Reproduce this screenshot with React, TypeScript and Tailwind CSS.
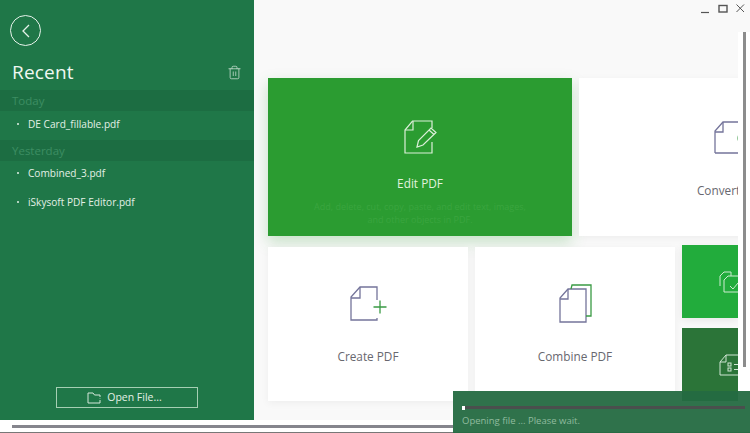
import { Trash2 } from "lucide-react";

const font = { fontFamily: '"Open Sans", "Noto Sans", sans-serif' };

function RecentFile({ name, className }: { name: string; className: string }) {
  return (
    <div className={`flex items-center pl-[17px] text-[10.1px] leading-[16px] text-[#e3f0e6] ${className}`}>
      <span className="mr-[9px] h-[2px] w-[2px] rounded-full bg-[#e3f0e6]" />
      {name}
    </div>
  );
}

function Sidebar() {
  return (
    <aside className="flex w-[254px] shrink-0 flex-col bg-[#1f7748]">
      <div className="ml-[10px] mt-[15px] flex h-[31px] w-[31px] items-center justify-center rounded-full border-[1.5px] border-[#e6f2ea]">
        <svg width="12" height="16" viewBox="0 0 12 16" fill="none" stroke="#e6f2ea" strokeWidth="1.3">
          <path d="M9 2 L3 8 L9 14" />
        </svg>
      </div>
      <div className="mt-[11px] flex h-[30px] items-center justify-between pl-[12px] pr-[12px]">
        <h1 className="text-[19px] leading-[30px] tracking-[0.2px] text-[#f0f7f2]">Recent</h1>
        <Trash2 size={15} strokeWidth={1.2} color="#cfe3d6" />
      </div>
      <div className="mt-[3px] h-[21px] bg-[#1c6d42] pl-[12px] text-[11.5px] leading-[22px] text-[#3c8d62]">Today</div>
      <RecentFile name="DE Card_fillable.pdf" className="mt-[5px]" />
      <div className="mt-[8px] h-[21px] bg-[#1c6d42] pl-[12px] text-[11.5px] leading-[22px] text-[#3c8d62]">Yesterday</div>
      <RecentFile name="Combined_3.pdf" className="mt-[4px]" />
      <RecentFile name="iSkysoft PDF Editor.pdf" className="mt-[13px]" />
      <button className="mx-auto mb-[12px] mt-auto flex h-[21px] w-[142px] items-center justify-center gap-[5px] border border-[#a5cfb3] pr-[5px] text-[10.5px] text-[#e3f0e6]">
        <svg width="15" height="12" viewBox="0 0 15 12" fill="none" stroke="#d5e8da" strokeWidth="1">
          <path d="M1 11 V1 H6 L7.5 3 H13 V5 M13 8 V11 H1" />
          <path d="M13 6.5 V7" />
        </svg>
        Open File...
      </button>
    </aside>
  );
}

function WindowControls() {
  return (
    <div className="flex h-[32px] items-start justify-end gap-[8px] pr-[5px] pt-[3px]">
      <svg width="9" height="10" viewBox="0 0 9 10" className="mt-[1px]" stroke="#555" strokeWidth="1.2">
        <path d="M0 8.5 H8" />
      </svg>
      <svg width="10" height="10" viewBox="0 0 10 10" fill="none" className="mt-[1px]" stroke="#555" strokeWidth="1.4">
        <rect x="1" y="1.5" width="8" height="6.5" />
      </svg>
      <svg width="9" height="10" viewBox="0 0 9 10" className="mt-[1px]" stroke="#555" strokeWidth="1">
        <path d="M0.5 0.5 L8 8 M8 0.5 L0.5 8" />
      </svg>
    </div>
  );
}

function EditIcon() {
  return (
    <svg width="36" height="36" viewBox="0 0 36 36" fill="none" stroke="#dcefd9" strokeWidth="1.2" className="translate-x-[1px]">
      <path d="M29 23 V34 H2 V11 L9.5 2 H29 V9" />
      <path d="M2 11 H10 V2" />
      <path d="M14 28 L15.5 21.5 L28 9 L33 13.5 L20 26 Z" />
      <path d="M26 11 L31 15.5" />
    </svg>
  );
}

function DocIcon({ children }: { children?: React.ReactNode }) {
  return (
    <svg width="44" height="36" viewBox="0 0 44 36" fill="none" stroke="#74749a" strokeWidth="1.3">
      {children}
    </svg>
  );
}

function Card({ title, icon, className = "" }: { title: string; icon: React.ReactNode; className?: string }) {
  return (
    <div className={`flex h-[154px] w-[200px] shrink-0 flex-col items-center bg-white pt-[39px] shadow-[0_2px_8px_rgba(0,0,0,0.05)] ${className}`}>
      <div className="flex h-[36px] items-center justify-center">{icon}</div>
      <div className="mt-[25px] text-[11.8px] leading-[18px] text-[#68686f]">{title}</div>
    </div>
  );
}

function Cards() {
  return (
    <div className="w-[484px] shrink-0 overflow-hidden pl-[14px] pt-[46px]">
      <div className="flex w-[700px] gap-[7px]">
        <div className="flex h-[158px] w-[304px] shrink-0 flex-col items-center bg-[#2b9c31] pt-[41px] shadow-[0_6px_14px_rgba(43,156,49,0.25)]">
          <EditIcon />
          <div className="mt-[19px] text-[11.8px] leading-[18px] text-[#e2f2df]">Edit PDF</div>
          <div className="mt-[8px] w-[230px] text-center text-[9px] leading-[13px] text-[#3aa53f]">
            Add, delete, cut, copy, paste, and edit text, images, and other objects in PDF.
          </div>
        </div>
        <div className="flex h-[158px] w-[304px] shrink-0 flex-col items-center bg-white pt-[42px] shadow-[0_2px_8px_rgba(0,0,0,0.05)]">
          <DocIcon>
            <path d="M6 33 V11 L14 2 H38 V33 H6" />
            <path d="M6 12 H14 V2" />
            <path d="M32 24 A8 8 0 0 1 38 10" stroke="#3a9a44" />
          </DocIcon>
          <div className="mt-[25px] text-[11.8px] leading-[18px] text-[#68686f]">Convert PDF</div>
        </div>
      </div>
      <div className="mt-[11px] flex gap-[7px]">
        <Card
          title="Create PDF"
          icon={
            <DocIcon>
              <path d="M31 14 V1 H14 L5 11 V34 H31 V32" />
              <path d="M5 12 H14 V1" />
              <path d="M34 14.5 V27.5 M27.5 21 H40.5" stroke="#3a9a44" />
            </DocIcon>
          }
        />
        <Card
          title="Combine PDF"
          icon={
            <svg width="34" height="40" viewBox="0 0 34 40" fill="none" stroke="#74749a" strokeWidth="1.3">
              <path d="M2 38 V14 L10 5 H28 V38 Z" />
              <path d="M2 15 H10 V5" />
              <path d="M13 5 L14 1 H33 V32 H28" stroke="#3a9a44" />
            </svg>
          }
        />
        <div className="-mt-[2px] flex flex-col gap-[10px]">
          <div className="flex h-[73px] w-[56px] items-center justify-end bg-[#22ac3c] pl-[37px] shadow-[0_2px_8px_rgba(0,0,0,0.08)]">
            <svg width="19" height="24" viewBox="0 0 19 24" fill="none" stroke="#cdebd0" strokeWidth="1">
              <path d="M1 16 V6 L5 2 H12 V6" />
              <path d="M5 22 V10 L9 6 H19 M5 22 H19" />
              <path d="M11 16 L14 19 L19 13" />
            </svg>
          </div>
          <div className="flex h-[73px] w-[56px] items-center justify-end bg-[#2b7438] pl-[37px]">
            <svg width="19" height="22" viewBox="0 0 19 22" fill="none" stroke="#cfe5d2" strokeWidth="1">
              <path d="M1 21 V8 L7 1 H19 M1 21 H19" />
              <path d="M1 8 H7 V1" />
              <rect x="9" y="9" width="3" height="3" />
              <rect x="9" y="14" width="3" height="3" />
              <path d="M15 10.5 H19 M15 15.5 H19" />
            </svg>
          </div>
        </div>
      </div>
    </div>
  );
}

export default function App() {
  return (
    <div className="relative flex h-[433px] w-[750px] flex-col overflow-hidden bg-white" style={font}>
      <div className="flex h-[420px] shrink-0">
        <Sidebar />
        <main className="flex flex-1 flex-col bg-[#f9f9f9]">
          <WindowControls />
          <div className="flex flex-1">
            <Cards />
            <div className="flex-1 bg-white pl-[5px]">
              <div className="h-[335px] w-[3px] bg-[#8c8c8c]" />
            </div>
          </div>
        </main>
      </div>
      <div className="ml-[12px] mt-[5px] h-[3px] w-[441px] bg-[#85858d]" />
      <div className="mt-[4px] h-[1px] bg-[#777]" />
      {/* opening file toast sits over the cards */}
      <div className="absolute bottom-0 right-0 flex h-[42px] w-[297px] flex-col bg-[#246a41]/95 pl-[9px] pr-[5px]">
        <div className="mt-[15px] flex h-[3px] items-center bg-[#4a4f4d]">
          <span className="h-[4px] w-[3px] bg-white" />
        </div>
        <div className="mt-[5px] text-[9.5px] leading-[14px] text-[#8fbb9f]">Opening file ... Please wait.</div>
      </div>
    </div>
  );
}
